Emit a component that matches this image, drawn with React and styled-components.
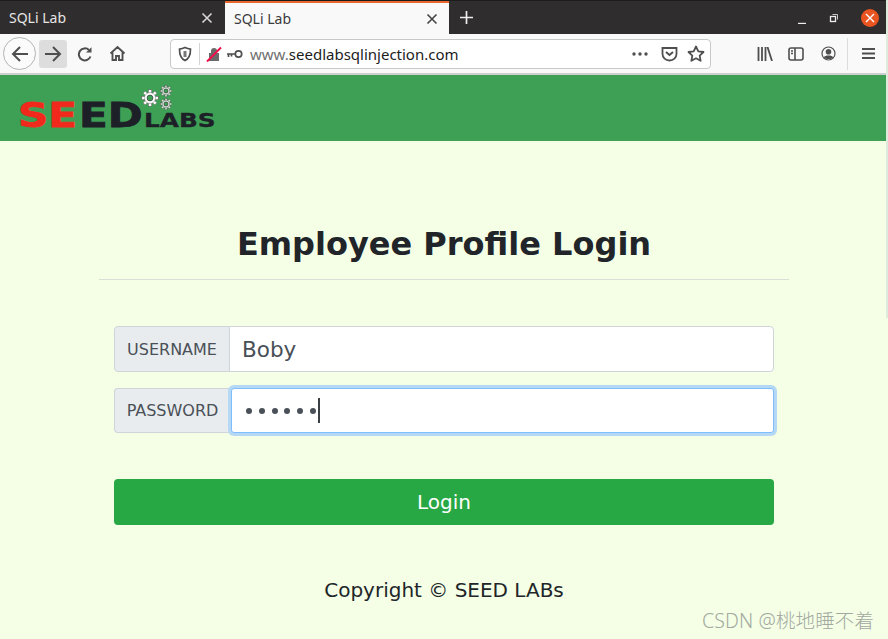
import React from "react"
import styled, { createGlobalStyle } from "styled-components"

const GlobalStyle = createGlobalStyle`
	html, body {
		margin: 0;
		padding: 0;
		background: #f4ffe6;
	}
	* {
		box-sizing: border-box;
	}
`

const Window = styled.div`
	position: relative;
	width: 888px;
	height: 639px;
	overflow: hidden;
	display: flex;
	flex-direction: column;
	background: #f4ffe6;
	font-family: "DejaVu Sans", Verdana, sans-serif;
`

const EdgeStrip = styled.div`
	position: absolute;
	top: 0;
	right: 0;
	width: 2px;
	height: 318px;
	background: #dcebdc;
`

const TabBar = styled.div`
	height: 34px;
	flex: none;
	display: flex;
	align-items: stretch;
	background: #2f2d2d;
	border-top: 1px solid #1d1c1c;
	font-family: "Noto Sans", "Open Sans", sans-serif;
	font-size: 14px;
`

const Tab = styled.div`
	width: ${(p) => (p.$active ? "224px" : "225px")};
	display: flex;
	align-items: center;
	justify-content: space-between;
	padding: ${(p) => (p.$active ? "0 11px 0 9px" : "0 12px 0 9px")};
	color: ${(p) => (p.$active ? "#3a3a3a" : "#e6e6e6")};
	background: ${(p) => (p.$active ? "#f9f9fa" : "transparent")};
	border-top: ${(p) => (p.$active ? "2px solid #e9662c" : "none")};
`

const TabTail = styled.div`
	flex: 1;
	display: flex;
	align-items: center;
	justify-content: space-between;
	padding: 0 9px 0 10px;
`

const WindowButtons = styled.div`
	display: flex;
	align-items: center;
	gap: 22px;
`

const MinimizeIcon = styled.svg`
	margin-top: 2px;
`

const CloseDot = styled.div`
	width: 18px;
	height: 18px;
	border-radius: 50%;
	background: #e95420;
	display: flex;
	align-items: center;
	justify-content: center;
`

const Toolbar = styled.div`
	height: 41px;
	flex: none;
	display: flex;
	align-items: center;
	padding: 0 0 0 3px;
	background: #f9f9fa;
	border-bottom: 2px solid #cfcfcf;
`

const BackButton = styled.div`
	width: 33px;
	height: 33px;
	border-radius: 50%;
	background: #fbfbfb;
	border: 1px solid #b4b4b4;
	display: flex;
	align-items: center;
	justify-content: center;
`

const ToolButton = styled.div`
	width: ${(p) => p.$w || 28}px;
	height: 28px;
	margin-left: ${(p) => p.$gap || 0}px;
	border-radius: 3px;
	background: ${(p) => (p.$pressed ? "#dddddd" : "transparent")};
	display: flex;
	align-items: center;
	justify-content: center;
	flex: none;
`

const UrlBar = styled.div`
	width: 541px;
	height: 30px;
	margin-left: 39px;
	flex: none;
	display: flex;
	align-items: center;
	background: #fff;
	border: 1px solid #c8c8c8;
	border-radius: 4px;
	padding: 0 5px 0 6px;
	font-family: "Noto Sans", "Open Sans", sans-serif;
	font-size: 15px;
`

const UrlDivider = styled.span`
	width: 1px;
	height: 22px;
	background: #d4d4d4;
	margin: 0 6px 0 6px;
`

const KeyIcon = styled.svg`
	margin-left: 4px;
`

const UrlText = styled.span`
	flex: 1;
	margin-left: 7px;
	color: #1c1c1c;
	white-space: nowrap;
`

const UrlPrefix = styled.span`
	color: #6f6f6f;
`

const UrlActions = styled.div`
	display: flex;
	align-items: center;
	gap: 9px;
`

const MoreDots = styled.svg`
	margin-right: 4px;
`

const ToolDivider = styled.span`
	width: 1px;
	height: 32px;
	background: #dcdcdc;
	margin-left: 4px;
`

const NavBar = styled.nav`
	height: 66px;
	flex: none;
	background: #3ea055;
	display: flex;
	align-items: flex-start;
	padding: 9px 0 0 19px;
`

const Content = styled.main`
	width: 690px;
	margin: 0 auto;
	display: flex;
	flex-direction: column;
	align-items: stretch;
`

const Title = styled.h2`
	margin: 83px 0 0;
	height: 56px;
	text-align: center;
	font-size: 32px;
	line-height: 40px;
	font-weight: 700;
	color: #212529;
	border-bottom: 1px solid #dcdfd8;
`

const LoginForm = styled.form`
	margin: 46px 15px 0;
	display: flex;
	flex-direction: column;
`

const InputGroup = styled.div`
	display: flex;
	height: ${(p) => p.$h}px;
	margin-bottom: ${(p) => p.$mb}px;
`

const InputLabel = styled.span`
	width: 116px;
	flex: none;
	display: flex;
	align-items: center;
	justify-content: center;
	font-size: 16px;
	color: #495057;
	background: #e9ecef;
	border: 1px solid #ced4da;
	border-right: ${(p) => (p.$focused ? "none" : "1px solid #ced4da")};
	border-radius: 4px 0 0 4px;
`

const InputBox = styled.div`
	flex: 1;
	display: flex;
	align-items: center;
	margin-left: ${(p) => (p.$focused ? "1px" : "-1px")};
	padding-left: 12px;
	font-size: 21.5px;
	color: #495057;
	background: #fff;
	border: 1px solid ${(p) => (p.$focused ? "#80bdff" : "#ced4da")};
	border-radius: ${(p) => (p.$focused ? "3px" : "0 4px 4px 0")};
	box-shadow: ${(p) => (p.$focused ? "0 0 0 3px #b5d8f5" : "none")};
`

const PasswordDots = styled.span`
	display: flex;
	gap: 6.8px;
	margin-left: 2px;
`

const Dot = styled.span`
	width: 6px;
	height: 6px;
	border-radius: 50%;
	background: #495057;
`

const Caret = styled.span`
	width: 2px;
	height: 25px;
	margin-left: 2px;
	background: #3a3f44;
`

const LoginButton = styled.button`
	height: 46px;
	border: none;
	border-radius: 4px;
	background: #28a745;
	color: #fff;
	font-family: inherit;
	font-size: 20px;
`

const Copyright = styled.p`
	margin: 53px 0 0;
	text-align: center;
	font-size: 20px;
	line-height: 24px;
	color: #212529;
`

const Watermark = styled.span`
	position: absolute;
	right: 14px;
	bottom: 5px;
	font-family: "Noto Sans", "Noto Sans CJK SC", sans-serif;
	font-size: 19.5px;
	font-weight: 300;
	letter-spacing: 0.1px;
	color: #a3a8a0;
	white-space: nowrap;
`

const GREY = "#4f4f4f"

function Icon({ size = 18, children }) {
	return (
		<svg width={size} height={size} viewBox={`0 0 ${size} ${size}`} fill="none" stroke={GREY} strokeWidth="2">
			{children}
		</svg>
	)
}

function Gear({ x, y, r, fill }) {
	const teeth = [0, 45, 90, 135, 180, 225, 270, 315]
	return (
		<g transform={`translate(${x} ${y})`}>
			{teeth.map((a) => (
				<rect key={a} x={-r * 0.22} y={-r * 1.25} width={r * 0.44} height={r * 2.5} fill={fill} stroke="#555" strokeWidth="0.4" transform={`rotate(${a})`} />
			))}
			<circle r={r * 0.85} fill={fill} stroke="#555" strokeWidth="0.4" />
			<circle r={r * 0.45} fill="#3ea055" stroke="#222" strokeWidth="0.6" />
		</g>
	)
}

function SeedLogo() {
	return (
		<svg width="200" height="54" viewBox="0 -4 200 54">
			<g fontFamily="DejaVu Sans" fontWeight="700">
				<g transform="translate(-1 39) scale(1.24 1)">
					<text fontSize="34" fill="#f0291c" stroke="#f0291c" strokeWidth="0.8">SE</text>
				</g>
				<g transform="translate(60 39) scale(1.24 1)">
					<text fontSize="34" fill="#1e2028" stroke="#1e2028" strokeWidth="0.8">ED</text>
				</g>
				<g transform="translate(125 39) scale(1.24 1)">
					<text fontSize="20" fill="#1e2028" stroke="#1e2028" strokeWidth="0.3">LABS</text>
				</g>
			</g>
			<Gear x={131} y={10} r={6.5} fill="#fff" />
			<Gear x={147} y={3} r={4.4} fill="#dcebdf" />
			<Gear x={147} y={16} r={4.4} fill="#dcebdf" />
		</svg>
	)
}

export default function App() {
	return (
		<Window>
			<GlobalStyle />
			<TabBar>
				<Tab>
					SQLi Lab
					<svg width="12" height="12" viewBox="0 0 12 12" stroke="#d8d8d8" strokeWidth="1.6">
						<path d="M1.5 1.5l9 9M10.5 1.5l-9 9" />
					</svg>
				</Tab>
				<Tab $active>
					SQLi Lab
					<svg width="12" height="12" viewBox="0 0 12 12" stroke="#444" strokeWidth="1.6">
						<path d="M1.5 1.5l9 9M10.5 1.5l-9 9" />
					</svg>
				</Tab>
				<TabTail>
					<svg width="15" height="15" viewBox="0 0 15 15" stroke="#eee" strokeWidth="1.7">
						<path d="M7.5 1v13M1 7.5h13" />
					</svg>
					<WindowButtons>
						<MinimizeIcon width="10" height="10" viewBox="0 0 10 10" stroke="#eee" strokeWidth="1.2">
							<path d="M1 9.4h8" />
						</MinimizeIcon>
						<svg width="10" height="10" viewBox="0 0 10 10" fill="none" stroke="#eee">
							<path d="M3.5 1.5h5v5" strokeWidth="0.8" />
							<rect x="1.5" y="3.5" width="5" height="5" strokeWidth="1.3" />
						</svg>
						<CloseDot>
							<svg width="10" height="10" viewBox="0 0 10 10" stroke="#fff" strokeWidth="1.4">
								<path d="M1 1l8 8M9 1l-8 8" />
							</svg>
						</CloseDot>
					</WindowButtons>
				</TabTail>
			</TabBar>

			<Toolbar>
				<BackButton>
					<Icon size={18}>
						<path d="M17 9H2M9 2L2 9l7 7" />
					</Icon>
				</BackButton>
				<ToolButton $pressed $gap={3}>
					<Icon size={18}>
						<path d="M1 9h15M9 2l7 7-7 7" />
					</Icon>
				</ToolButton>
				<ToolButton $gap={4}>
					<Icon size={16}>
						<path d="M13.5 10.5A6 6 0 1 1 12 4" />
						<path d="M14.5 1.2L9 6.5h5.5z" fill={GREY} stroke="none" />
					</Icon>
				</ToolButton>
				<ToolButton $gap={4}>
					<Icon size={17}>
						<path d="M1.5 8.5L8.5 2l7 6.5M3.5 7.5V15h3.5v-4h3v4h3.5V7.5" strokeWidth="1.9" />
					</Icon>
				</ToolButton>
				<UrlBar>
					<Icon size={16}>
						<path d="M2.5 3.2C5 2.8 6.5 2.2 8 1.5c1.5.7 3 1.3 5.5 1.7 0 6-1.5 9.5-5.5 11.3C4 12.7 2.5 9.2 2.5 3.2z" strokeWidth="1.7" />
						<path d="M8 5v6" strokeWidth="3" stroke="#777" />
					</Icon>
					<UrlDivider />
					<svg width="16" height="16" viewBox="0 0 16 16">
						<path d="M5 7V5a3 3 0 0 1 6 0v2h2v8H3V7z" fill="#6a6a6a" />
						<path d="M1 15.5L15 1.5" stroke="#f00f4b" strokeWidth="2" />
					</svg>
					<KeyIcon width="17" height="10" viewBox="0 0 17 10" fill="none" stroke={GREY} strokeWidth="1.7">
						<circle cx="12.5" cy="5" r="3.2" />
						<path d="M9 5H1M2.5 5v3M5.5 5v2.5" />
					</KeyIcon>
					<UrlText>
						<UrlPrefix>www.</UrlPrefix>seedlabsqlinjection.com
					</UrlText>
					<UrlActions>
						<MoreDots width="16" height="4" viewBox="0 0 16 4" fill={GREY}>
							<circle cx="2" cy="2" r="1.7" />
							<circle cx="8" cy="2" r="1.7" />
							<circle cx="14" cy="2" r="1.7" />
						</MoreDots>
						<svg width="17" height="16" viewBox="0 0 17 16" fill="none" stroke={GREY} strokeWidth="1.8">
							<path d="M1.5 2h14v6a7 6.5 0 0 1-14 0z" />
							<path d="M5 6l3.5 3L12 6" strokeWidth="2" />
						</svg>
						<svg width="18" height="17" viewBox="0 0 18 17" fill="none" stroke={GREY} strokeWidth="1.8" strokeLinejoin="round">
							<path d="M9 1.5l2.3 4.8 5.200.7-3.800 3.600.900 5.200L9 13.300l-4.600 2.500.900-5.200L1.500 7l5.200-.7z" />
						</svg>
					</UrlActions>
				</UrlBar>
				<ToolButton $gap={39} $w={30}>
					<svg width="16" height="14" viewBox="0 0 16 14" stroke={GREY} strokeWidth="1.8" fill="none">
						<path d="M1.5 0v14M5 0v14M8.5 0v14M10.500 0l4.500 14" />
					</svg>
				</ToolButton>
				<ToolButton $gap={1} $w={30}>
					<svg width="16" height="14" viewBox="0 0 16 14" stroke={GREY} strokeWidth="1.6" fill="none">
						<rect x="1" y="1" width="14" height="12" rx="2" />
						<path d="M7 1v12M3 4h2M3 6.5h2" />
					</svg>
				</ToolButton>
				<ToolButton $gap={2} $w={30}>
					<svg width="15" height="15" viewBox="0 0 15 15" fill="none" stroke={GREY} strokeWidth="1.2">
						<circle cx="7.5" cy="7.5" r="6.5" />
						<circle cx="7.5" cy="5.8" r="2.8" fill={GREY} stroke="none" />
						<path d="M2.8 11.200c1-2.200 8.400-2.200 9.400 0-1.500 2.500-7.900 2.500-9.400 0z" fill={GREY} stroke="none" />
					</svg>
				</ToolButton>
				<ToolDivider />
				<ToolButton $gap={6}>
					<svg width="13" height="13" viewBox="0 0 13 13" stroke={GREY} strokeWidth="1.8">
						<path d="M0 2h13M0 6.5h13M0 11h13" />
					</svg>
				</ToolButton>
			</Toolbar>

			<NavBar>
				<SeedLogo />
			</NavBar>

			<Content>
				<Title>Employee Profile Login</Title>
				<LoginForm>
					<InputGroup $h={46} $mb={16}>
						<InputLabel>USERNAME</InputLabel>
						<InputBox>Boby</InputBox>
					</InputGroup>
					<InputGroup $h={45} $mb={46}>
						<InputLabel $focused>PASSWORD</InputLabel>
						<InputBox $focused>
							<PasswordDots>
								{[0, 1, 2, 3, 4, 5].map((i) => (
									<Dot key={i} />
								))}
							</PasswordDots>
							<Caret />
						</InputBox>
					</InputGroup>
					<LoginButton type="button">Login</LoginButton>
				</LoginForm>
				<Copyright>Copyright © SEED LABs</Copyright>
			</Content>

			<EdgeStrip />
			<Watermark>CSDN @桃地睡不着</Watermark>
		</Window>
	)
}
